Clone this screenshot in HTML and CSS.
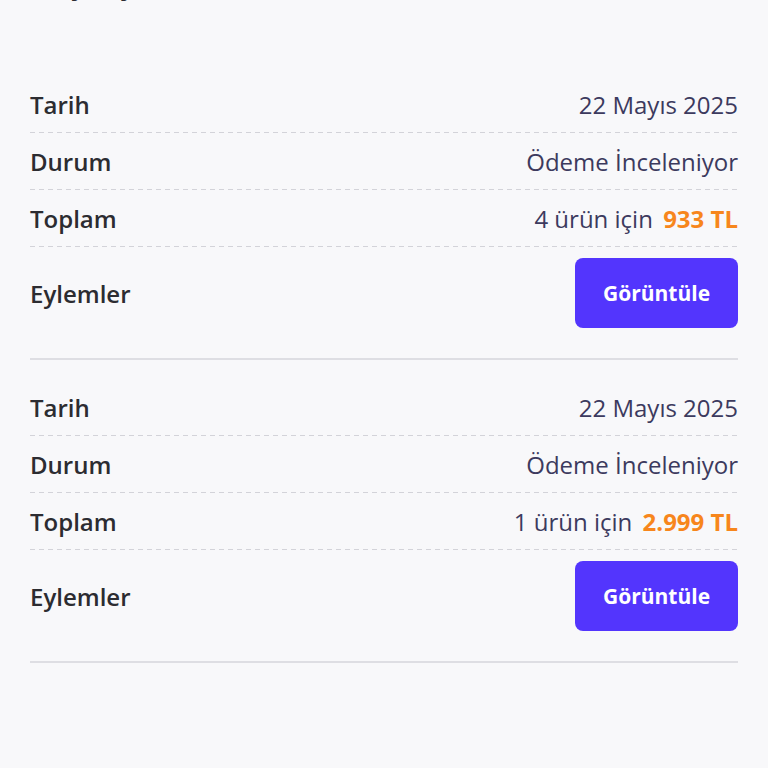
FILE: index.html
```html
<!DOCTYPE html>
<html lang="tr">
<head>
    <meta charset="UTF-8">
    <meta name="viewport" content="width=device-width, initial-scale=1.0">
    <title>Geçmiş</title>
    <link rel="stylesheet" href="styles.css">
</head>
<body>
    <div class="container">
        <h1 class="page-title">Geçmiş</h1>

        <div class="order">
            <div class="order-row">
                <span class="label">Tarih</span>
                <span class="value">22 Mayıs 2025</span>
            </div>
            <div class="order-row">
                <span class="label">Durum</span>
                <span class="value">Ödeme İnceleniyor</span>
            </div>
            <div class="order-row">
                <span class="label">Toplam</span>
                <span class="value">4 ürün için <strong class="price">933 TL</strong></span>
            </div>
            <div class="order-row actions">
                <span class="label">Eylemler</span>
                <button class="btn">Görüntüle</button>
            </div>
        </div>

        <div class="order">
            <div class="order-row">
                <span class="label">Tarih</span>
                <span class="value">22 Mayıs 2025</span>
            </div>
            <div class="order-row">
                <span class="label">Durum</span>
                <span class="value">Ödeme İnceleniyor</span>
            </div>
            <div class="order-row">
                <span class="label">Toplam</span>
                <span class="value">1 ürün için <strong class="price">2.999 TL</strong></span>
            </div>
            <div class="order-row actions">
                <span class="label">Eylemler</span>
                <button class="btn">Görüntüle</button>
            </div>
        </div>
    </div>
</body>
</html>
```

FILE: styles.css
```css
body {
    font-family: 'Open Sans', 'Noto Sans', sans-serif;
    margin: 0;
    background-color: #f8f8fa;
    color: #2c2c31;
}

.container {
    padding: 0 30px;
}

.page-title {
    margin: -34px 0 57px;
    font-size: 28px;
    line-height: 34px;
    font-weight: 700;
}

.order {
    padding: 19px 0;
    border-bottom: 2px solid #dedee3;
}

.order-row {
    display: flex;
    justify-content: space-between;
    align-items: center;
    height: 57px;
    background: linear-gradient(to right, #d3d3d9 60%, transparent 0) left bottom / 9px 1px repeat-x;
}

.order-row.actions {
    height: auto;
    padding: 11px 0;
    background: none;
}

.label {
    font-size: 24px;
    font-weight: 600;
    color: #2c2c31;
}

.value {
    font-size: 24px;
    color: #3c3a5e;
}

.price {
    margin-left: 4px;
    font-weight: 700;
    color: #f7861c;
}

.btn {
    width: 163px;
    height: 70px;
    border: none;
    border-radius: 8px;
    background: #5335fd;
    color: white;
    font-family: inherit;
    font-size: 21px;
    font-weight: 700;
    cursor: pointer;
}
```
